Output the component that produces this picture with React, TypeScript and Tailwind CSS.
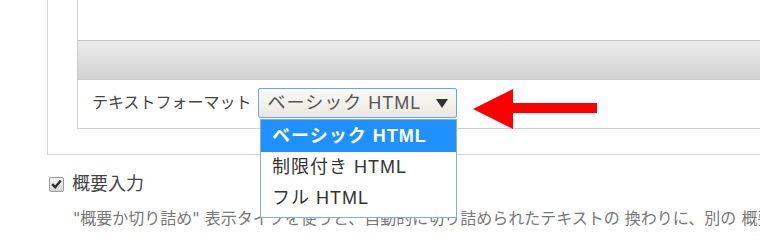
const font = "font-['DejaVu_Sans','Noto_Sans_CJK_JP',sans-serif]";
const selectFont = "font-['Liberation_Sans','Noto_Sans_CJK_JP',sans-serif] text-[18px] tracking-[1px]";

const formats = ["ベーシック HTML", "制限付き HTML", "フル HTML"];

function FormatSelect() {
  return (
    <div
      className={`flex h-[30px] w-[199px] items-center justify-between rounded-[2px] border border-[#74a2ea] bg-gradient-to-b from-[#fafaf6] to-[#e9e9e0] pl-[9px] pr-[8px] text-[#555] ${selectFont}`}
    >
      <span>{formats[0]}</span>
      <svg width="12" height="9" viewBox="0 0 12 9">
        <polygon points="0,0 12,0 6,9" fill="#333" />
      </svg>
    </div>
  );
}

function FormatMenu() {
  return (
    <div
      className={`absolute left-[260px] top-[119px] z-10 h-[99px] w-[197px] border border-[#8ca9d8] bg-white text-[#333] ${selectFont}`}
    >
      {formats.map((f, i) => (
        <div
          key={f}
          className={
            i === 0
              ? "flex h-[32px] items-center bg-[#1e90ff] pl-[11px] font-bold text-white"
              : "flex h-[31px] items-center pl-[11px]"
          }
        >
          {f}
        </div>
      ))}
    </div>
  );
}

function RedArrow() {
  return (
    <svg
      className="absolute left-[473px] top-[89px]"
      width="124"
      height="40"
      viewBox="0 0 124 40"
    >
      <polygon points="0,20 40,0 40,14 124,14 124,24 40,24 40,40" fill="#ff0000" />
    </svg>
  );
}

export default function App() {
  return (
    <div className={`relative h-[251px] w-[760px] overflow-hidden bg-white ${font}`}>
      {/* 外枠 */}
      <div className="ml-[47px] w-[760px] border-b border-l border-[#d6d6d6] pb-[25px] pl-[29px]">
        <div className="border-b border-l border-[#cdcdcd]">
          <div className="h-[40px] bg-white" />
          <div className="h-px bg-[#c2c2c2]" />
          <div className="h-[38px] bg-gradient-to-b from-[#ebebeb] to-[#d2d2d2]" />
          <div className="h-px bg-[#cbcbcb]" />
          <div className="flex h-[48px] items-start gap-[6px] pl-[14px] pt-[8px]">
            <span className="text-[16px] leading-[30px] text-[#444]">テキストフォーマット</span>
            <FormatSelect />
          </div>
        </div>
      </div>

      <div className="ml-[49px] mt-[17px] flex h-[24px] items-center gap-[8px]">
        <div className="flex h-[15px] w-[15px] items-center justify-center rounded-[2px] border border-[#9a9a9a] bg-gradient-to-b from-[#f4f4f4] to-[#d6d6d6]">
          <svg width="11" height="10" viewBox="0 0 11 10">
            <path d="M1.2 5.2 L4.2 8.2 L9.8 1.4" fill="none" stroke="#2e2e2e" strokeWidth="2.4" />
          </svg>
        </div>
        <span className="text-[18px] leading-[24px] text-[#444]">概要入力</span>
      </div>

      <p className="ml-[73px] mt-[12px] whitespace-nowrap text-[16px] leading-[22px] text-[#777]">
        "概要か切り詰め" 表示タイプを使うと、自動的に切り詰められたテキストの 換わりに、別の 概要を入力できます。
      </p>

      <FormatMenu />
      <RedArrow />
    </div>
  );
}
